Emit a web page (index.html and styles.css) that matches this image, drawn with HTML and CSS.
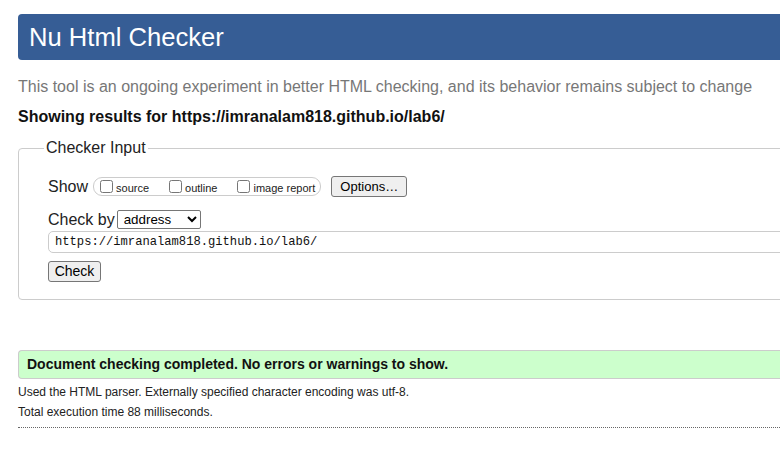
FILE: index.html
```html
<!DOCTYPE html>
<html lang="en">
<head>
<meta charset="utf-8">
<title>Nu Html Checker</title>
<link rel="stylesheet" href="styles.css">
</head>
<body>
<div class="page">
  <h1 class="title">Nu Html Checker</h1>
  <p class="intro">This tool is an ongoing experiment in better HTML checking, and its behavior remains subject to change</p>
  <p class="showing">Showing results for https://imranalam818.github.io/lab6/</p>

  <fieldset class="checker">
    <legend class="legend">Checker Input</legend>
    <div class="row row-show">
      <span class="label">Show</span>
      <span class="opts">
        <label class="opt"><input type="checkbox" class="cb"><span class="opt-text">source</span></label>
        <label class="opt"><input type="checkbox" class="cb"><span class="opt-text">outline</span></label>
        <label class="opt opt-last"><input type="checkbox" class="cb"><span class="opt-text">image report</span></label>
      </span>
      <button class="btn btn-options" type="button">Options…</button>
    </div>
    <div class="row row-by">
      <span class="label">Check by</span>
      <select class="sel"><option>address</option></select>
    </div>
    <div class="row row-url">
      <input class="url" type="text" value="https://imranalam818.github.io/lab6/">
    </div>
    <div class="row row-check">
      <button class="btn btn-check" type="button">Check</button>
    </div>
  </fieldset>

  <p class="success">Document checking completed. No errors or warnings to show.</p>
  <p class="details details-first">Used the HTML parser. Externally specified character encoding was utf-8.</p>
  <p class="details">Total execution time 88 milliseconds.</p>
  <div class="rule"></div>
</div>
</body>
</html>
```
FILE: styles.css
```css
html, body {
  margin: 0;
  padding: 0;
  overflow: hidden;
  background: #fff;
}
.page {
  width: 1100px;
  padding: 14px 0 0 18px;
  font-family: "Liberation Sans", Arial, sans-serif;
  color: #000;
}
.title {
  margin: 0;
  height: 46px;
  line-height: 46px;
  padding: 0 11px;
  background: #365d95;
  color: #fff;
  font-size: 25.6px;
  font-weight: normal;
  border-radius: 4px;
}
.intro {
  margin: 18px 0 0;
  font-size: 16px;
  line-height: 18px;
  color: #777;
}
.showing {
  margin: 12px 0 0;
  font-size: 16px;
  line-height: 18px;
  font-weight: bold;
  color: #111;
}
.checker {
  margin: 13px 0 0;
  padding: 19px 0 17px 29px;
  border: 1px solid #ccc;
  border-radius: 4px;
  min-width: 0;
}
.legend {
  margin-left: -4px;
  padding: 0 2px;
  font-size: 16px;
  line-height: 18px;
  color: #222;
}
.row {
  display: flex;
  align-items: center;
}
.label {
  font-size: 16px;
  line-height: 18px;
  color: #222;
  white-space: nowrap;
}
.row-show {
  height: 21px;
}
.opts {
  display: flex;
  align-items: center;
  flex: none;
  height: 17px;
  margin-left: 5px;
  padding: 0 5px 0 6px;
  border: 1px solid #ccc;
  border-radius: 9px;
}
.opt {
  display: flex;
  align-items: center;
  flex: none;
  white-space: nowrap;
  font-size: 11px;
  color: #222;
  margin-right: 20px;
}
.opt-text {
  padding-top: 2px;
}
.opt-last {
  margin-right: 0;
}
.cb {
  flex: none;
  width: 13px;
  height: 13px;
  margin: 0 3px 0 0;
}
.btn {
  font-family: "Liberation Sans", Arial, sans-serif;
  font-size: 13px;
  color: #000;
  background: #efefef;
  border: 1px solid #767676;
  border-radius: 3px;
  padding: 0 8px;
  height: 21px;
  line-height: 19px;
  white-space: nowrap;
}
.btn-options {
  flex: none;
  margin-left: 10px;
  width: 76px;
  padding: 0;
}
.row-by {
  margin-top: 13px;
  height: 19px;
}
.sel {
  margin-left: 2px;
  width: 84px;
  height: 19px;
  font-family: "Liberation Sans", Arial, sans-serif;
  font-size: 13.33px;
  border: 1px solid #767676;
  border-radius: 2px;
  background: #fff;
  color: #000;
  padding: 0 0 0 2px;
}
.row-url {
  margin-top: 2px;
}
.url {
  width: 1000px;
  height: 22px;
  box-sizing: border-box;
  border: 1px solid #ccc;
  border-radius: 5px;
  padding: 0 6px;
  font-family: "Liberation Mono", Consolas, monospace;
  font-size: 12.15px;
  color: #111;
  outline: none;
}
.row-check {
  margin-top: 8px;
}
.btn-check {
  width: 53px;
  padding: 0;
  font-size: 14px;
}
.success {
  margin: 50px 0 0;
  border: 1px solid #ccc;
  border-right: none;
  border-radius: 4px 0 0 4px;
  background: #ccffcc;
  font-size: 14px;
  font-weight: bold;
  line-height: 27px;
  padding: 0 0 0 8px;
  color: #111;
}
.details {
  margin: 0;
  font-size: 12px;
  line-height: 20px;
  color: #222;
}
.details-first {
  margin-top: 3px;
}
.rule {
  margin-top: 5px;
  border-top: 1px dotted #666;
}
```
